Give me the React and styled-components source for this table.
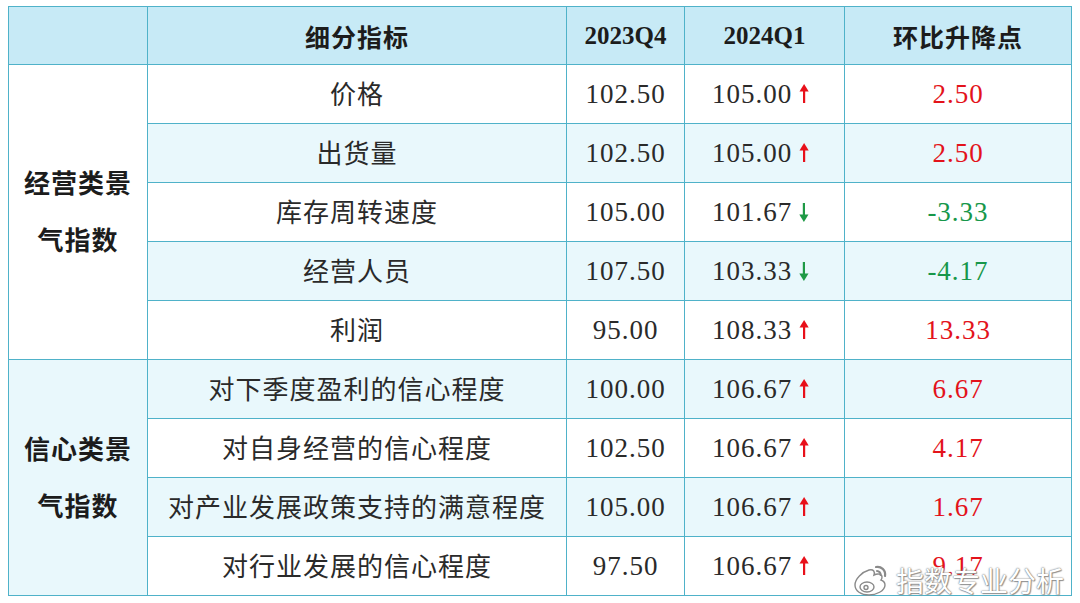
import React from 'react';
import styled, { createGlobalStyle } from 'styled-components';

const Global = createGlobalStyle`
  html, body { margin: 0; padding: 0; background: #ffffff; }
  body { width: 1080px; height: 603px; overflow: hidden; }
`;

const Page = styled.div`
  position: relative;
  width: 1080px;
  height: 603px;
  padding: 6px 8px 0 8px;
  box-sizing: border-box;
  background: #fff;
`;

const Grid = styled.div`
  display: grid;
  grid-template-columns: 138px 418px 117px 159px 226px;
  grid-template-rows: 57px repeat(9, 58px);
  gap: 1px;
  padding: 1px;
  width: 1064px;
  box-sizing: border-box;
  background: #4fb2c9;
`;

const HeadCell = styled.div`
  background: #c7eaf6;
  display: flex;
  align-items: center;
  justify-content: center;
  font-family: ${p => (p.$num ? '"Liberation Serif", "Noto Sans CJK SC", serif' : '"Noto Sans CJK SC", sans-serif')};
  font-weight: 700;
  font-size: 25px;
  color: #1c1c1c;
  letter-spacing: ${p => (p.$num ? '0' : '1px')};
`;

const GroupCell = styled.div`
  grid-row: span ${p => p.$span};
  background: ${p => (p.$alt ? '#e9f8fc' : '#ffffff')};
  display: flex;
  flex-direction: column;
  align-items: center;
  justify-content: center;
  font-family: "Noto Sans CJK SC", sans-serif;
  font-weight: 700;
  font-size: 26px;
  line-height: 57px;
  color: #1c1c1c;
  letter-spacing: 1px;
  padding-bottom: 4px;
`;

const Cell = styled.div`
  background: ${p => (p.$alt ? '#e9f8fc' : '#ffffff')};
  display: flex;
  align-items: center;
  justify-content: center;
  gap: 7px;
  font-family: ${p => (p.$num ? '"Liberation Serif", "Noto Sans CJK SC", serif' : '"Noto Sans CJK SC", sans-serif')};
  font-size: ${p => (p.$num ? '27px' : '26px')};
  letter-spacing: 1px;
  color: ${p => (p.$tone === 'up' ? '#e3131b' : p.$tone === 'down' ? '#17974a' : '#2a2a2a')};
  padding-right: ${p => (p.$arrowed ? '8px' : '0')};
  padding-bottom: ${p => (p.$num ? '0' : '3px')};
`;

const Watermark = styled.div`
  position: absolute;
  left: 852px;
  top: 560px;
  display: flex;
  align-items: center;
  gap: 6px;
  font-family: "Noto Sans CJK SC", sans-serif;
  font-size: 28px;
  color: #ffffff;
  text-shadow: 0 0 1px #777, 0 0 2px #888, 1px 1px 1px #999;
  letter-spacing: 0;
`;

const Arrow = ({ dir }) => {
  const color = dir === 'up' ? '#e8101a' : '#1f9a46';
  return (
    <svg width="10" height="20" viewBox="0 0 10 20" style={{ transform: dir === 'down' ? 'rotate(180deg)' : 'none' }}>
      <rect x="4" y="5" width="2.2" height="14" fill={color} />
      <polygon points="0.5,7.5 5.1,0 9.7,7.5" fill={color} />
    </svg>
  );
};

const WeiboLogo = () => (
  <svg width="38" height="34" viewBox="0 0 38 34">
    <g fill="#ffffff" stroke="#8a8a8a" strokeWidth="1.4">
      <path d="M3 22c0-6 7-13 14-15 5-1 6 2 5 5 4-2 8-1 8 2 0 1 0 2-1 3 3 1 4 3 4 5 0 6-9 10-16 10C9 32 3 28 3 22z" />
      <ellipse cx="15" cy="24" rx="7" ry="5" />
      <circle cx="14" cy="24.5" r="2" />
      <path d="M24 4c5-1 10 3 9 9" fill="none" strokeWidth="2.2" strokeLinecap="round" />
      <path d="M25 8c2 0 4 2 3.5 4" fill="none" strokeWidth="2" strokeLinecap="round" />
    </g>
  </svg>
);

const groups = [
  {
    lines: ['经营类景', '气指数'],
    rows: [
      ['价格', '102.50', '105.00', 'up', '2.50'],
      ['出货量', '102.50', '105.00', 'up', '2.50'],
      ['库存周转速度', '105.00', '101.67', 'down', '-3.33'],
      ['经营人员', '107.50', '103.33', 'down', '-4.17'],
      ['利润', '95.00', '108.33', 'up', '13.33'],
    ],
  },
  {
    lines: ['信心类景', '气指数'],
    rows: [
      ['对下季度盈利的信心程度', '100.00', '106.67', 'up', '6.67'],
      ['对自身经营的信心程度', '102.50', '106.67', 'up', '4.17'],
      ['对产业发展政策支持的满意程度', '105.00', '106.67', 'up', '1.67'],
      ['对行业发展的信心程度', '97.50', '106.67', 'up', '9.17'],
    ],
  },
];

export default function App() {
  let idx = 0;
  return (
    <Page>
      <Global />
      <Grid>
        <HeadCell />
        <HeadCell>细分指标</HeadCell>
        <HeadCell $num>2023Q4</HeadCell>
        <HeadCell $num>2024Q1</HeadCell>
        <HeadCell>环比升降点</HeadCell>
        {groups.map((g, gi) => {
          const items = [
            <GroupCell key={`g${gi}`} $span={g.rows.length} $alt={gi % 2 === 1}>
              {g.lines.map(l => (
                <span key={l}>{l}</span>
              ))}
            </GroupCell>,
          ];
          g.rows.forEach(r => {
            const alt = idx % 2 === 1;
            idx += 1;
            items.push(
              <Cell key={`a${idx}`} $alt={alt}>{r[0]}</Cell>,
              <Cell key={`b${idx}`} $alt={alt} $num>{r[1]}</Cell>,
              <Cell key={`c${idx}`} $alt={alt} $num $arrowed>
                <span>{r[2]}</span>
                <Arrow dir={r[3]} />
              </Cell>,
              <Cell key={`d${idx}`} $alt={alt} $num $tone={r[3]}>{r[4]}</Cell>
            );
          });
          return items;
        })}
      </Grid>
      <Watermark>
        <WeiboLogo />
        <span>指数专业分析</span>
      </Watermark>
    </Page>
  );
}
